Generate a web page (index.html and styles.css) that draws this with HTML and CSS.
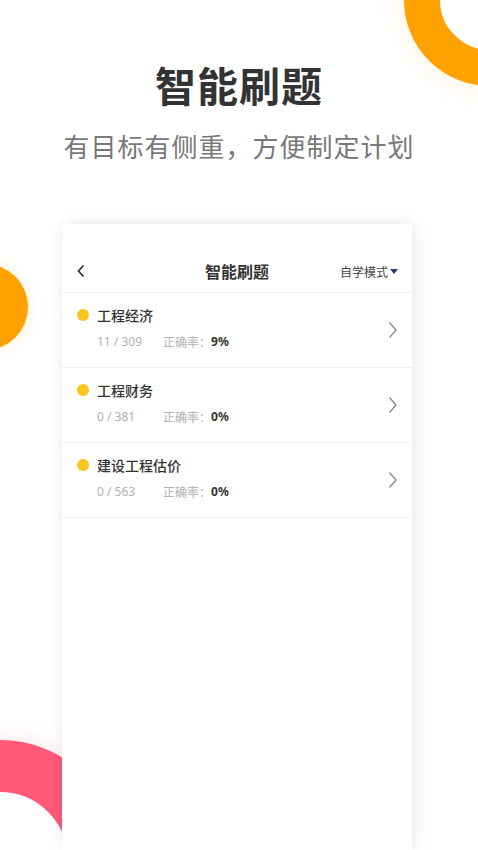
FILE: index.html
```html
<!DOCTYPE html>
<html lang="zh-CN">
<head>
<meta charset="utf-8">
<link rel="stylesheet" href="styles.css">
</head>
<body>
<div class="page">
  <div class="deco ring-top"></div>
  <div class="deco dot-left"></div>
  <div class="deco ring-bottom"></div>

  <h1 class="headline">智能刷题</h1>
  <p class="subline">有目标有侧重，方便制定计划</p>

  <div class="phone">
    <div class="statusbar"></div>
    <div class="nav">
      <svg class="back" width="10" height="14" viewBox="0 0 10 14"><path d="M7.5 1.5 L2.5 7 L7.5 12.5" fill="none" stroke="#333" stroke-width="1.8"/></svg>
      <div class="nav-title">智能刷题</div>
      <div class="mode">自学模式<span class="tri"></span></div>
    </div>
    <ul class="list">
      <li class="row">
        <div class="row-main">
          <div class="row-title"><span class="dot"></span>工程经济</div>
          <div class="row-sub"><span class="count">11 / 309</span><span class="rate-label">正确率：</span><span class="rate">9%</span></div>
        </div>
        <svg class="chev" width="10" height="18" viewBox="0 0 10 18"><path d="M1.5 1.5 L8 9 L1.5 16.5" fill="none" stroke="#888" stroke-width="1.3"/></svg>
      </li>
      <li class="row">
        <div class="row-main">
          <div class="row-title"><span class="dot"></span>工程财务</div>
          <div class="row-sub"><span class="count">0 / 381</span><span class="rate-label">正确率：</span><span class="rate">0%</span></div>
        </div>
        <svg class="chev" width="10" height="18" viewBox="0 0 10 18"><path d="M1.5 1.5 L8 9 L1.5 16.5" fill="none" stroke="#888" stroke-width="1.3"/></svg>
      </li>
      <li class="row">
        <div class="row-main">
          <div class="row-title"><span class="dot"></span>建设工程估价</div>
          <div class="row-sub"><span class="count">0 / 563</span><span class="rate-label">正确率：</span><span class="rate">0%</span></div>
        </div>
        <svg class="chev" width="10" height="18" viewBox="0 0 10 18"><path d="M1.5 1.5 L8 9 L1.5 16.5" fill="none" stroke="#888" stroke-width="1.3"/></svg>
      </li>
    </ul>
  </div>
</div>
</body>
</html>
```
FILE: styles.css
```css
html, body {
  margin: 0;
  padding: 0;
  background: #fff;
}
body {
  font-family: "Noto Sans CJK SC", "Noto Sans", sans-serif;
  color: #333;
}
.page {
  position: relative;
  width: 478px;
  height: 850px;
  overflow: hidden;
  background: #fff;
  display: flex;
  flex-direction: column;
  align-items: stretch;
}
.deco {
  position: absolute;
  border-radius: 50%;
  box-sizing: border-box;
}
.ring-top {
  left: 404px;
  top: -86px;
  width: 172px;
  height: 172px;
  border: 36px solid #ffa100;
  box-shadow: 0 0 24px rgba(255, 161, 0, 0.18);
}
.dot-left {
  left: -58px;
  top: 264px;
  width: 86px;
  height: 86px;
  background: #ffa100;
  box-shadow: 0 0 14px rgba(255, 161, 0, 0.2);
}
.ring-bottom {
  left: -120px;
  top: 740px;
  width: 240px;
  height: 240px;
  border: 52px solid #ff5878;
  box-shadow: 0 0 22px rgba(255, 88, 120, 0.18);
}
.headline {
  position: relative;
  margin: 58px 0 0;
  text-align: center;
  font-size: 41px;
  line-height: 52px;
  font-weight: 700;
  color: #333;
  letter-spacing: 1px;
}
.subline {
  position: relative;
  margin: 18px 0 0;
  text-align: center;
  font-size: 26px;
  line-height: 36px;
  color: #787878;
  letter-spacing: 1px;
}
.phone {
  position: relative;
  margin: 60px 0 0 62px;
  width: 350px;
  flex: 1;
  background: #fff;
  box-shadow: 0 0 12px rgba(0, 0, 0, 0.07), 6px 0 18px rgba(0, 0, 0, 0.04);
}
.statusbar {
  height: 26px;
}
.nav {
  height: 42px;
  display: flex;
  align-items: center;
  position: relative;
  padding: 0 14px;
  border-bottom: 1px solid #f0f0f0;
}
.back {
  display: block;
}
.nav-title {
  position: absolute;
  left: 0;
  right: 0;
  text-align: center;
  font-size: 16px;
  font-weight: 700;
  color: #333;
  pointer-events: none;
}
.mode {
  margin-left: auto;
  display: flex;
  align-items: center;
  font-size: 12px;
  color: #444;
  position: relative;
}
.tri {
  margin-left: 2px;
  width: 0;
  height: 0;
  border-left: 4px solid transparent;
  border-right: 4px solid transparent;
  border-top: 5px solid #2b3a7a;
}
.list {
  list-style: none;
  margin: 0;
  padding: 0;
}
.row {
  height: 74px;
  border-bottom: 1px solid #f0f0f0;
  display: flex;
  align-items: center;
  padding: 0 14px 0 15px;
}
.row-main {
  flex: 1;
  display: flex;
  flex-direction: column;
  gap: 8px;
  margin-top: -5px;
}
.row-title {
  display: flex;
  align-items: center;
  font-size: 14px;
  line-height: 20px;
  font-weight: 500;
  color: #333;
}
.dot {
  width: 12px;
  height: 12px;
  border-radius: 50%;
  background: #fac61e;
  margin-right: 8px;
}
.row-sub {
  padding-left: 20px;
  font-size: 12px;
  line-height: 17px;
  color: #b0b0b0;
  display: flex;
  align-items: center;
}
.count {
  width: 66px;
  font-family: "Noto Sans", sans-serif;
}
.rate-label {
  color: #b0b0b0;
}
.rate {
  color: #333;
  font-weight: 700;
  font-family: "Noto Sans", sans-serif;
}
.chev {
  display: block;
  margin-right: 0;
}
```
